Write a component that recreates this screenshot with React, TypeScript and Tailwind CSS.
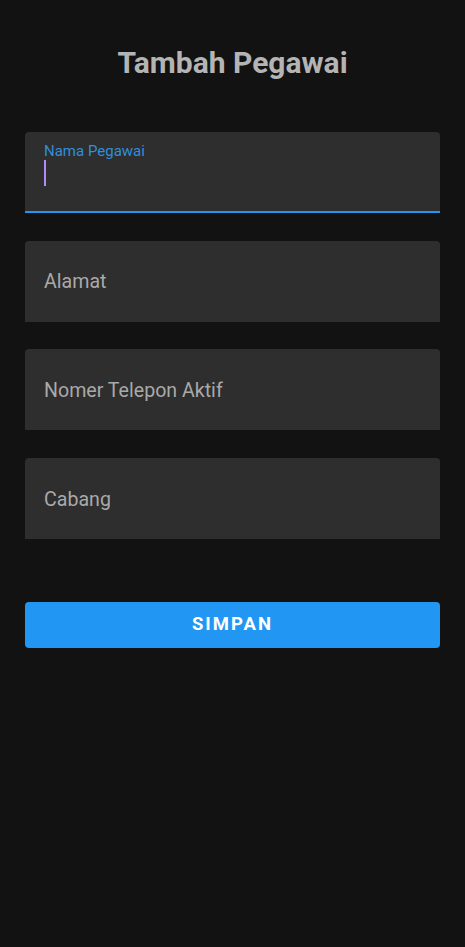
import React from "react";

function Field({ label, focused }: { label: string; focused?: boolean }) {
  if (focused) {
    return (
      <div className="relative h-[81px] rounded-t-[4px] bg-[#2e2e2e] border-b-2 border-[#2196f3] px-[19px]">
        <div className="pt-[11px] text-[15px] leading-[17px] text-[#2f8fdc]">{label}</div>
        <div className="mt-[0px] h-[26px] w-[2px] bg-[#b48afa]" />
      </div>
    );
  }
  return (
    <div className="flex h-[81px] items-center rounded-t-[4px] bg-[#2e2e2e] px-[19px] pt-[2px]">
      <span className="text-[19.6px] text-[#a9a9a9]">{label}</span>
    </div>
  );
}

export default function App() {
  return (
    <div
      className="min-h-[947px] w-full bg-[#121212] px-[25px]"
      style={{ fontFamily: "Roboto, 'Noto Sans', sans-serif" }}
    >
      <h1 className="pt-[44px] text-center text-[30px] font-bold leading-[38px] text-[#b4b4b4]">
        Tambah Pegawai
      </h1>
      <div className="mt-[50px] flex flex-col gap-[27.7px]">
        <Field label="Nama Pegawai" focused />
        <Field label="Alamat" />
        <Field label="Nomer Telepon Aktif" />
        <Field label="Cabang" />
      </div>
      <button className="mt-[63px] flex h-[46px] w-full items-center justify-center rounded-[4px] bg-[#2196f3] text-[18.5px] font-bold tracking-[0.11em] text-white">
        SIMPAN
      </button>
    </div>
  );
}
